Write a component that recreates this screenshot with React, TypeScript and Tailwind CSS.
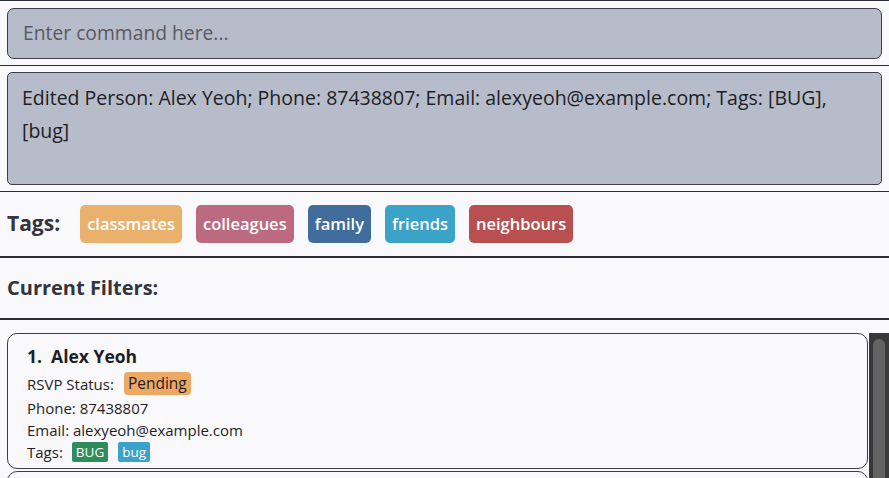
import React from 'react';

const tags = [
  { name: 'classmates', color: 'bg-[#e9b16b]' },
  { name: 'colleagues', color: 'bg-[#bc6a80]' },
  { name: 'family', color: 'bg-[#406d9c]' },
  { name: 'friends', color: 'bg-[#3ba2c8]' },
  { name: 'neighbours', color: 'bg-[#b84f51]' },
];

export default function App() {
  return (
    <div className="h-[478px] w-[889px] overflow-hidden bg-[#f9f9fb] font-['Open_Sans',sans-serif] text-[#2e2e38]">
      <div className="border-t border-[#2c2e36] px-[7px] pt-[7px] pb-[6px]">
        <div className="flex h-[51px] items-center rounded-[7px] border border-[#3c3f48] bg-[#b6bcc9] px-[15px] text-[19.3px] text-[#5a5a62]">
          Enter command here...
        </div>
      </div>
      <div className="border-t border-[#2c2e36] px-[7px] pt-[6px] pb-[6px]">
        <div className="h-[113px] rounded-[5px] border border-[#3c3f48] bg-[#b6bcc9] px-[14px] pt-[8px] text-[19.5px] leading-[33px] text-[#1e1e26]">
          Edited Person: Alex Yeoh; Phone: 87438807; Email: alexyeoh@example.com; Tags: [BUG], [bug]
        </div>
      </div>
      <div className="flex h-[65px] items-center gap-[14px] border-t border-[#2c2e36] px-[7px]">
        <span className="mr-[6px] text-[21px] font-bold text-[#33343f]">Tags:</span>
        {tags.map((t) => (
          <span
            key={t.name}
            className={`${t.color} flex h-[38px] items-center rounded-[5px] px-[7px] text-[16.5px] font-semibold text-white`}
          >
            {t.name}
          </span>
        ))}
      </div>
      <div className="flex h-[62px] items-center border-t-2 border-[#2c2e36] px-[7px]">
        <span className="text-[20px] font-bold text-[#33343f]">Current Filters:</span>
      </div>
      <div className="flex gap-px border-t-2 border-[#2c2e36] pt-[13px] pl-[7px]">
        <div className="flex flex-1 flex-col gap-[2px]">
          <div className="h-[136px] rounded-[10px] border border-[#3c3f48] bg-[#f9f9fb] px-[19px] pt-[10px]">
            <div className="text-[17.5px] font-bold leading-[24px] text-[#1e1e26]">1.&nbsp; Alex Yeoh</div>
            <div className="text-[15px] leading-[22px] text-[#1e1e26]">
              <div className="flex items-center pt-[4px] pb-[2px]">
                RSVP Status:
                <span className="ml-[10px] rounded-[4px] bg-[#eda963] px-[4px] text-[15.5px] leading-[23px]">Pending</span>
              </div>
              <div>Phone: 87438807</div>
              <div>Email: alexyeoh@example.com</div>
              <div className="flex items-center">
                Tags:
                <span className="ml-[9px] rounded-[2px] bg-[#2f8d5b] px-[4px] text-[13.5px] leading-[20px] text-white">BUG</span>
                <span className="ml-[10px] rounded-[2px] bg-[#3ba2c8] px-[4px] text-[13.5px] leading-[20px] text-white">bug</span>
              </div>
            </div>
          </div>
          <div className="h-[40px] rounded-[10px] border border-[#3c3f48] bg-[#f9f9fb]" />
        </div>
        <div className="h-[200px] w-[20px] bg-[#393939] px-[4px] py-[6px]">
          <div className="h-full rounded-[6px] bg-[#636363]" />
        </div>
      </div>
    </div>
  );
}
